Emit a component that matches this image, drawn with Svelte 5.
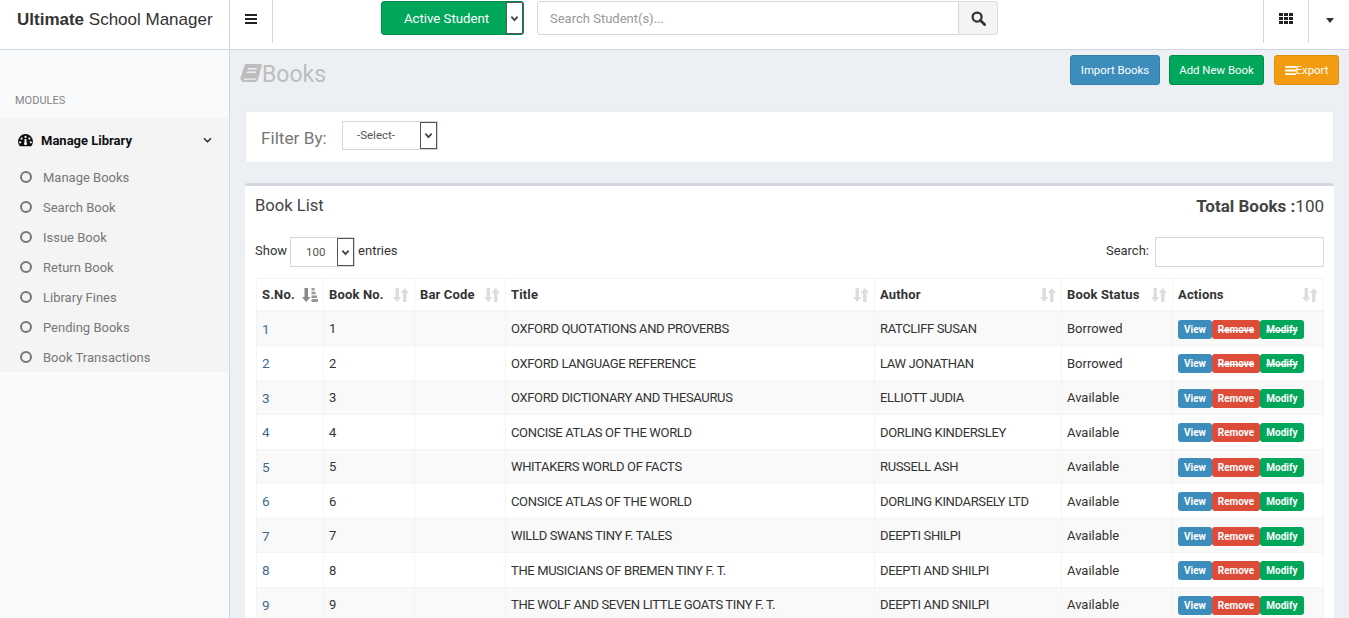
<script>
  const modules = ['Manage Books','Search Book','Issue Book','Return Book','Library Fines','Pending Books','Book Transactions'];
  const cols = ['S.No.','Book No.','Bar Code','Title','Author','Book Status','Actions'];
  const rows = [
    ['OXFORD QUOTATIONS AND PROVERBS','RATCLIFF SUSAN','Borrowed'],
    ['OXFORD LANGUAGE REFERENCE','LAW JONATHAN','Borrowed'],
    ['OXFORD DICTIONARY AND THESAURUS','ELLIOTT JUDIA','Available'],
    ['CONCISE ATLAS OF THE WORLD','DORLING KINDERSLEY','Available'],
    ['WHITAKERS WORLD OF FACTS','RUSSELL ASH','Available'],
    ['CONSICE ATLAS OF THE WORLD','DORLING KINDARSELY LTD','Available'],
    ['WILLD SWANS TINY F. TALES','DEEPTI SHILPI','Available'],
    ['THE MUSICIANS OF BREMEN TINY F. T.','DEEPTI AND SHILPI','Available'],
    ['THE WOLF AND SEVEN LITTLE GOATS TINY F. T.','DEEPTI AND SNILPI','Available']
  ];
</script>

{#snippet chevron()}
  <svg class="chev" viewBox="0 0 10 10" width="9" height="9"><path d="M1.500 3 L5 6.800 L8.500 3" fill="none" stroke="currentColor" stroke-width="2"/></svg>
{/snippet}

{#snippet sortIcon(active)}
  <svg class="sort" viewBox="0 0 16 14" width="16" height="14">
    <path d="M2.500 0h3.500v9h2.500L4.200 14 0 9h2.500z" fill={active ? '#888' : '#ddd'}/>
    {#if active}
      <path d="M9.500 0h3v2.500h-3zM9.500 3.700h4v2.500h-4zM9.500 7.400h5.500v2.500H9.500zM9.500 11h6.500v3H9.500z" fill="#999"/>
    {:else}
      <path d="M10 14V5H7.500L11.800 0 16 5h-2.500v9z" fill="#ddd"/>
    {/if}
  </svg>
{/snippet}

<div class="page">
  <header class="topbar">
    <div class="brand"><b>Ultimate</b> School Manager</div>
    <div class="menu-toggle">
      <svg viewBox="0 0 12 10" width="12" height="10"><path d="M0 0h12v2H0zM0 4h12v2H0zM0 8h12v2H0z" fill="#222"/></svg>
    </div>
    <div class="student-select">
      <span>Active Student</span>
      <span class="arrow-box">{@render chevron()}</span>
    </div>
    <div class="search-group">
      <div class="search-input">Search Student(s)...</div>
      <div class="search-btn">
        <svg viewBox="0 0 16 16" width="15" height="15"><circle cx="6.500" cy="6.500" r="4.800" fill="none" stroke="#333" stroke-width="2.400"/><path d="M10 10l4.500 4.500" stroke="#333" stroke-width="3" stroke-linecap="round"/></svg>
      </div>
    </div>
    <div class="top-right">
      <div class="tr-item grid-item">
        <svg viewBox="0 0 14 11" width="14" height="11"><path d="M0 0h4v3H0zM5 0h4v3H5zM10 0h4v3h-4zM0 4h4v3H0zM5 4h4v3H5zM10 4h4v3h-4zM0 8h4v3H0zM5 8h4v3H5zM10 8h4v3h-4z" fill="#222"/></svg>
      </div>
      <div class="tr-item caret-item"><span class="caret"></span></div>
    </div>
  </header>

  <div class="body">
    <aside class="sidebar">
      <div class="mod-label">MODULES</div>
      <div class="mod-group">
        <div class="mod-head">
          <svg class="gauge" viewBox="0 0 16 14" width="15" height="13"><path fill-rule="evenodd" d="M8 0a8 8 0 0 1 6.900 12l-.8 1.300H1.900L1.100 12A8 8 0 0 1 8 0zM8 2a1.200 1.200 0 1 0 0 2.400A1.200 1.200 0 0 0 8 2zM3.800 3.700a1.200 1.200 0 1 0 0 2.400 1.200 1.200 0 0 0 0-2.400zM12.200 3.700a1.200 1.200 0 1 0 0 2.400 1.200 1.200 0 0 0 0-2.400zM2.300 7.800a1.200 1.200 0 1 0 0 2.400 1.200 1.200 0 0 0 0-2.400zM13.700 7.800a1.200 1.200 0 1 0 0 2.400 1.200 1.200 0 0 0 0-2.400zM7 5.500l-.2 3.900a1.600 1.600 0 1 0 2.400 0L9 5.500z" fill="#111"/></svg>
          <span class="mod-title">Manage Library</span>
          <svg class="mod-chev" viewBox="0 0 10 8" width="9" height="7"><path d="M1 1.500 L5 5.500 L9 1.500" fill="none" stroke="#222" stroke-width="1.500"/></svg>
        </div>
        {#each modules as m}
          <div class="mod-item"><span class="ring"></span><span>{m}</span></div>
        {/each}
      </div>
    </aside>

    <main class="content">
      <div class="title-row">
        <h1>
          <svg viewBox="0 0 22 20" width="22" height="20"><path d="M6 1h14.500c1 0 1.500.8 1.200 1.700L18 16.500c-.4 1.500-1.400 2.500-3 2.500H4c-2 0-3.500-1.500-3.500-3.500 0-.5 0-1 .2-1.500L4.500 2.500C4.800 1.500 5.200 1 6 1zM8 5l-.4 1.500h9L17 5zM7 8.500l-.4 1.500h9l.4-1.500zM3.500 15.500c0 .8.600 1.300 1.300 1.300H15c.8 0 1.300-.4 1.500-1.300z" fill="#bdbdbd" fill-rule="evenodd"/></svg>
          <span>Books</span>
        </h1>
        <div class="actions">
          <div class="btn blue">Import Books</div>
          <div class="btn green">Add New Book</div>
          <div class="btn orange">
            <svg viewBox="0 0 12 10" width="11" height="9"><path d="M0 0h12v2H0zM0 4h12v2H0zM0 8h12v2H0z" fill="#fff"/></svg>Export
          </div>
        </div>
      </div>

      <section class="filter">
        <span class="filter-label">Filter By:</span>
        <div class="fake-select filter-select">
          <span>-Select-</span>
          <span class="arrow-box">{@render chevron()}</span>
        </div>
      </section>

      <section class="box">
        <div class="box-head">
          <h2>Book List</h2>
          <div class="total"><b>Total Books :</b>100</div>
        </div>
        <div class="controls">
          <div class="show"><span>Show</span>
            <div class="fake-select len-select">
              <span>100</span>
              <span class="arrow-box">{@render chevron()}</span>
            </div>
            <span>entries</span>
          </div>
          <div class="search"><span>Search:</span> <div class="search-field"></div></div>
        </div>
        <table>
          <colgroup>
            <col class="c1"/><col class="c2"/><col class="c3"/><col class="c4"/><col class="c5"/><col class="c6"/><col class="c7"/>
          </colgroup>
          <thead>
            <tr>
              {#each cols as c, i}
                <th><div class="th-in"><span>{c}</span>{@render sortIcon(i === 0)}</div></th>
              {/each}
            </tr>
          </thead>
          <tbody>
            {#each rows as r, i}
              <tr>
                <td class="sn">{i + 1}</td>
                <td>{i + 1}</td>
                <td></td>
                <td class="caps">{r[0]}</td>
                <td class="caps">{r[1]}</td>
                <td>{r[2]}</td>
                <td>
                  <div class="act" class:struck={r[2] === 'Borrowed'}>
                    <span class="mini blue">View</span><span class="mini red lt">Remove</span><span class="mini green lt">Modify</span>
                  </div>
                </td>
              </tr>
            {/each}
          </tbody>
        </table>
      </section>
    </main>
  </div>
</div>

<style>
  :global(body) { margin: 0; overflow: hidden; background: #ecf0f5; }
  .page { height: 618px; overflow: hidden; font-family: "Roboto", "Noto Sans", sans-serif; font-size: 13px; color: #333; display: flex; flex-direction: column; }
  .topbar { height: 49px; flex: none; background: #fff; border-bottom: 1px solid #d2d6de; display: flex; align-items: flex-start; }
  .brand { width: 230px; height: 49px; box-sizing: border-box; border-right: 1px solid #d2d6de; flex: none; font-family: "Liberation Sans", sans-serif; font-size: 17px; line-height: 39px; padding-left: 17px; color: #333; }
  .menu-toggle { width: 43px; height: 43px; box-sizing: border-box; border-right: 1px solid #d2d6de; flex: none; display: flex; align-items: center; justify-content: center; padding-bottom: 5px; margin-right: 108px; }
  .student-select { height: 34px; box-sizing: border-box; margin-top: 1px; background: #00a65a; border: 1px solid #008d4c; border-radius: 3px; color: #fff; display: flex; align-items: stretch; justify-content: space-between; flex: none; margin-right: 13px; width: 143px; }
  .student-select > span:first-child { padding-left: 22px; line-height: 33px; font-size: 13.200px; }
  .arrow-box { width: 17px; background: #fff; box-sizing: border-box; border: 1px solid #555; display: flex; align-items: center; justify-content: center; color: #444; flex: none; }
  .chev { display: block; }
  .search-group { display: flex; width: 461px; height: 34px; margin-top: 1px; flex: none; }
  .search-input { flex: 1; border: 1px solid #d2d6de; border-radius: 3px 0 0 3px; box-sizing: border-box; padding-left: 12px; line-height: 33px; color: #999; }
  .search-btn { width: 39px; box-sizing: border-box; background: #f4f4f4; border: 1px solid #ddd; border-left: none; border-radius: 0 3px 3px 0; display: flex; align-items: center; justify-content: center; }
  .top-right { margin-left: auto; display: flex; }
  .tr-item { height: 43px; box-sizing: border-box; border-left: 1px solid #d2d6de; display: flex; align-items: center; justify-content: center; }
  .grid-item { width: 45px; padding-bottom: 6px; }
  .caret-item { width: 41px; padding-bottom: 2px; padding-left: 2px; box-sizing: border-box; }
  .caret { border-top: 5px solid #333; border-left: 4px solid transparent; border-right: 4px solid transparent; }

  .body { flex: 1; display: flex; min-height: 0; }
  .sidebar { width: 230px; box-sizing: border-box; flex: none; background: #f9fafc; border-right: 1px solid #d2d6de; padding-top: 43px; }
  .mod-label { font-size: 11px; color: #848484; padding: 1px 0 0 15px; line-height: 14px; margin-bottom: 10px; }
  .mod-group { background: #f4f4f5; }
  .mod-head { height: 44px; display: flex; align-items: center; padding: 0 17px 0 18px; color: #111; font-weight: 700; }
  .gauge { margin-right: 8px; flex: none; }
  .mod-title { flex: 1; }
  .mod-item { height: 30px; display: flex; align-items: center; padding-left: 20px; color: #777; }
  .ring { width: 8px; height: 8px; border: 2px solid #777; border-radius: 50%; margin-right: 11px; flex: none; }

  .content { flex: 1; min-width: 0; padding: 5px 15px 0; box-sizing: border-box; }
  .title-row { display: flex; justify-content: space-between; height: 56px; margin: 0 -5px; }
  h1 { margin: 4px 0 0; font-size: 23px; font-weight: 400; color: #bdbdbd; display: flex; align-items: flex-start; height: 32px; line-height: 32px; }
  h1 svg { margin-top: 4px; }
  .actions { display: flex; align-items: flex-start; }
  .btn { height: 30px; box-sizing: border-box; border-radius: 3px; color: #fff; font-size: 11.400px; border: 1px solid; display: flex; align-items: center; justify-content: center; }
  .btn.blue { width: 90px; background: #3c8dbc; border-color: #367fa9; margin-right: 9px; }
  .btn.green { width: 95px; background: #00a65a; border-color: #008d4c; margin-right: 10px; }
  .btn.orange { width: 65px; background: #f39c12; border-color: #e08e0b; }
  .filter { height: 52px; box-sizing: border-box; background: #fff; border-radius: 3px; border: 1px solid #e8ebf0; display: flex; align-items: center; padding-left: 15px; margin-bottom: 20px; }
  .filter-label { font-size: 17.200px; color: #777; width: 81px; flex: none; padding-top: 1px; }
  .fake-select { display: flex; align-items: stretch; justify-content: space-between; background: #fff; border: 1px solid #d2d6de; box-sizing: border-box; font-size: 11.500px; color: #555; }
  .filter-select { width: 96px; height: 29px; margin-bottom: 4px; }
  .filter-select > span:first-child { padding-left: 14px; line-height: 27px; }
  .len-select { width: 65px; height: 30px; flex: none; margin: 0 1px 0 1px; }
  .len-select > span:first-child { padding-left: 15px; line-height: 28px; }

  .box { background: #fff; border-top: 3px solid #d2d6de; border-radius: 3px; padding: 0 10px; }
  .box-head { display: flex; justify-content: space-between; align-items: center; height: 40px; }
  h2 { margin: -1px 0 0; font-size: 16.600px; font-weight: 400; color: #444; }
  .total { font-size: 17px; color: #444; }
  .total b { font-weight: 700; }
  .controls { display: flex; justify-content: space-between; padding-top: 11px; height: 30px; margin-bottom: 11px; }
  .show, .search { display: flex; align-items: flex-start; gap: 2px; line-height: 27px; }
  .search { gap: 6px; }
  .search-field { width: 169px; height: 30px; box-sizing: border-box; border: 1px solid #d2d6de; }
  table { border-collapse: collapse; table-layout: fixed; width: 1067px; margin-left: 1px; font-size: 13px; }
  .c1 { width: 67px; } .c2 { width: 91px; } .c3 { width: 91px; } .c4 { width: 369px; } .c5 { width: 187px; } .c6 { width: 111px; } .c7 { width: 151px; }
  th, td { border: 1px solid #f4f4f4; padding: 0 5px; height: 34.500px; box-sizing: border-box; text-align: left; font-weight: 400; white-space: nowrap; overflow: hidden; }
  th { font-weight: 700; height: 32.750px; border-bottom-width: 2px; letter-spacing: .15px; }
  .caps { letter-spacing: -.35px; }
  .th-in { display: flex; justify-content: space-between; align-items: center; }
  .sort { flex: none; }
  tbody tr:nth-child(odd) { background: #f9f9f9; }
  .sn { color: #3c6b8f; font-size: 13.500px; }
  .act { display: flex; margin-top: 1px; }
  .mini { font-size: 10px; font-weight: 700; color: #fff; height: 19px; line-height: 19px; text-align: center; border-radius: 3px; }
  .mini.blue { width: 34px; background: #3c8dbc; }
  .mini.red { width: 48px; background: #dd4b39; }
  .mini.green { width: 44px; background: #00a65a; }
  .struck .lt { text-decoration: line-through; }
</style>
